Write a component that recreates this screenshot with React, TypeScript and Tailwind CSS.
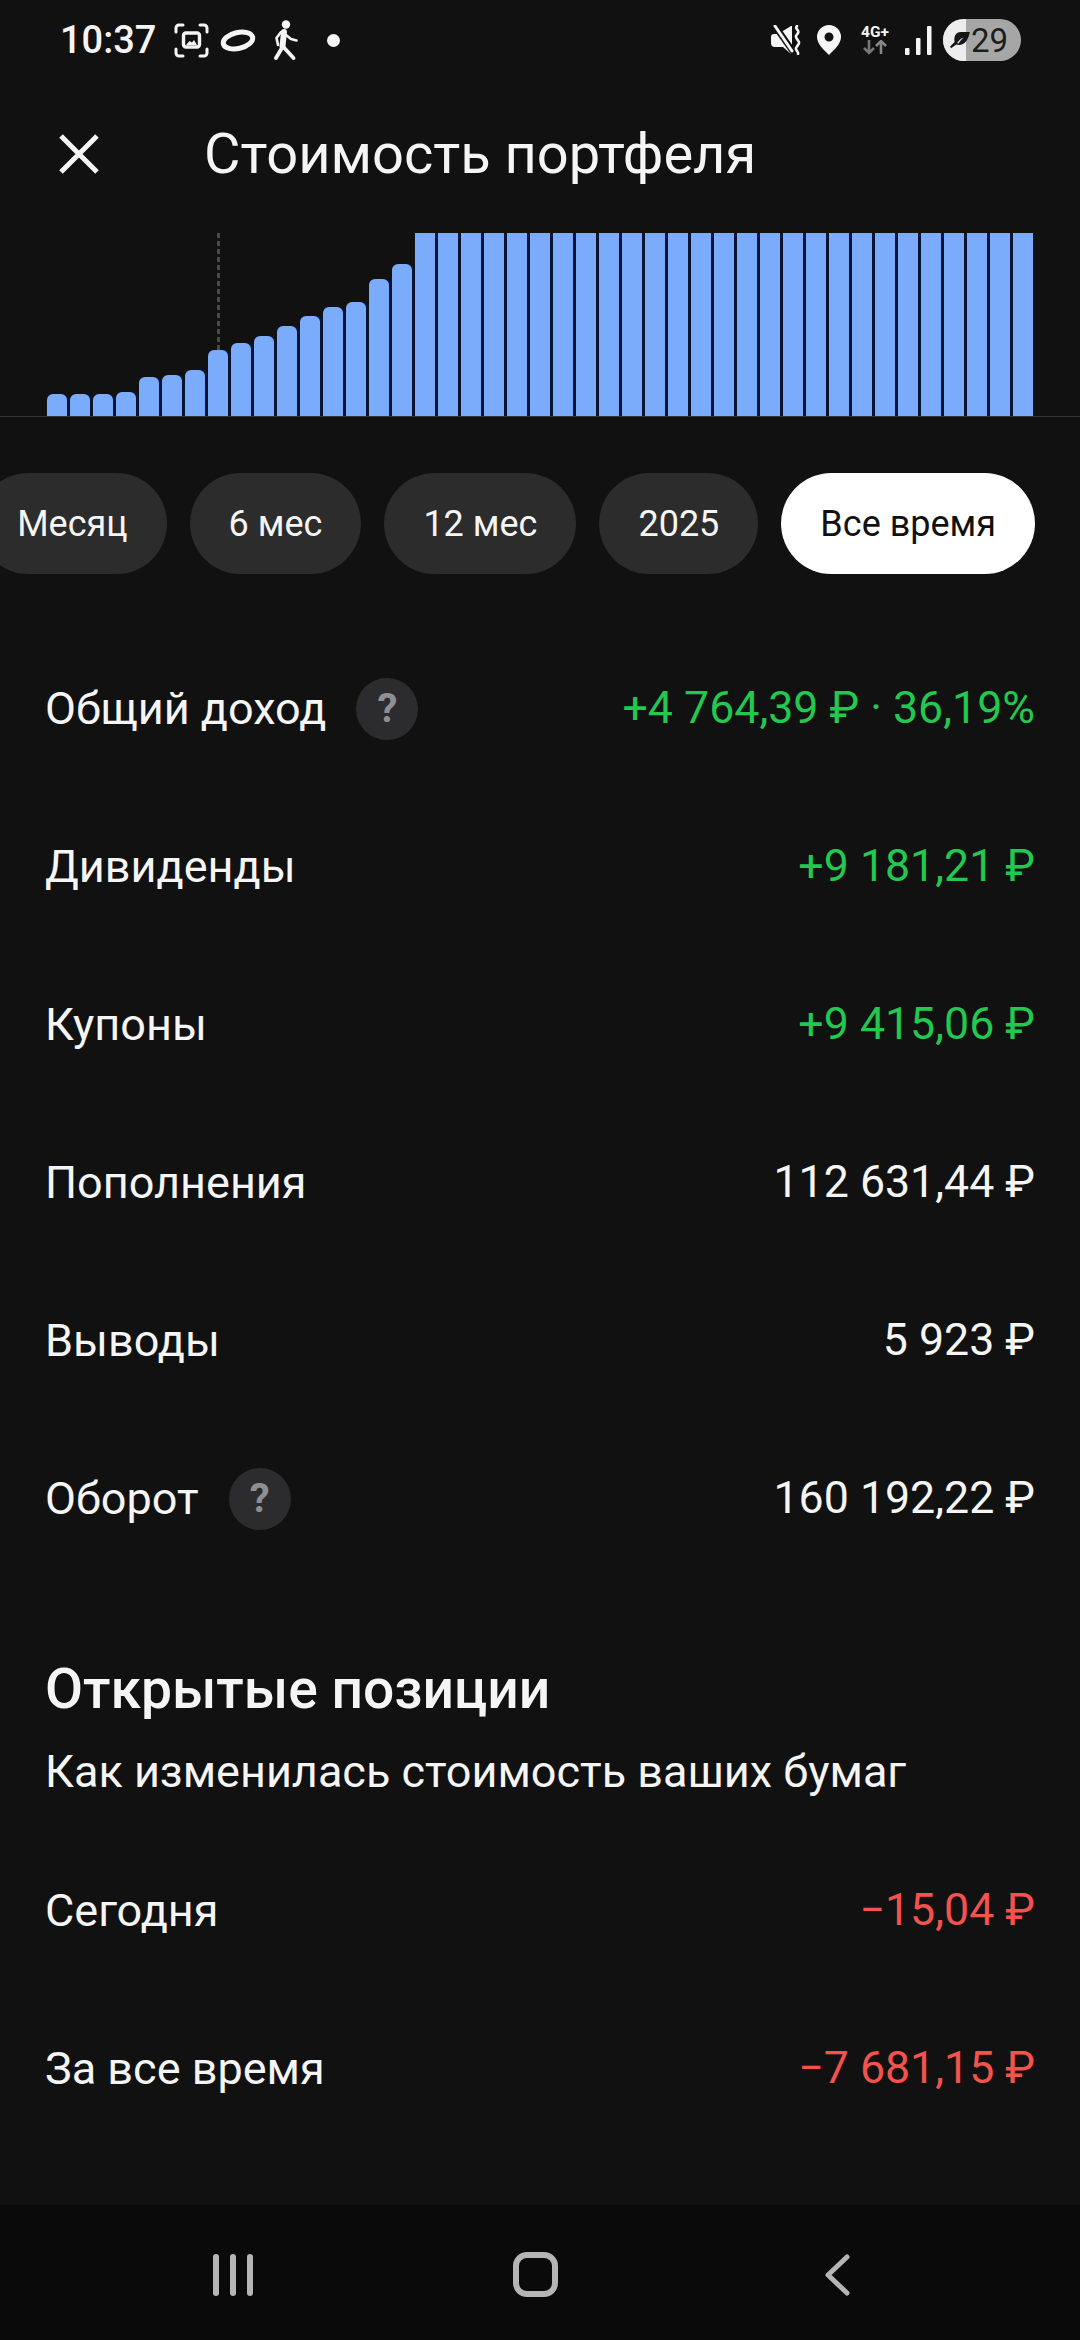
const heights = [22, 22, 22, 24, 39, 41, 46, 66, 73, 80, 90, 100, 109, 114, 137, 152];
const bars = Array.from({ length: 43 }, (_, i) => (i < heights.length ? heights[i] : 183));

const font = { fontFamily: "Roboto, sans-serif" };

function Help() {
  return (
    <span className="ml-[30px] flex h-[62px] w-[62px] items-center justify-center rounded-full bg-[#2c2c2e] text-[40px] font-bold leading-none text-[#8e8e93]">
      ?
    </span>
  );
}

function Row({ label, value, color, help }: { label: string; value: string; color?: string; help?: boolean }) {
  return (
    <div className="flex h-[158px] items-center justify-between pl-[45px] pr-[45px] text-[45px] text-[#f5f5f5]">
      <div className="flex items-center">
        <span>{label}</span>
        {help && <Help />}
      </div>
      <span className={"text-[44.7px] " + (color ?? "")}>{value}</span>
    </div>
  );
}

function StatusLeft() {
  return (
    <div className="flex items-center">
      <span className="w-[100px] text-[38px] font-medium leading-none text-[#f5f5f5]">10:37</span>
      <svg width="35" height="35" viewBox="0 0 35 35" className="ml-[14px]" fill="none" stroke="#f5f5f5" strokeWidth="3" strokeLinecap="round">
        <path d="M2 9V5a3 3 0 0 1 3-3h4M26 2h4a3 3 0 0 1 3 3v4M33 26v4a3 3 0 0 1-3 3h-4M9 33H5a3 3 0 0 1-3-3v-4" />
        <rect x="9.5" y="10" width="16" height="14" rx="2.5" strokeWidth="3.4" />
        <path d="M12 22l3.5-4 2.5 1.5 2-2.5 3 5z" fill="#f5f5f5" stroke="none" />
      </svg>
      <svg width="36" height="25" viewBox="0 0 36 25" className="ml-[11px]" fill="none">
        <ellipse cx="18" cy="12.5" rx="15" ry="8" transform="rotate(-13 18 12.5)" stroke="#f5f5f5" strokeWidth="5" />
      </svg>
      <svg width="25" height="40" viewBox="0 0 25 40" className="ml-[18px]" fill="none" stroke="#f5f5f5" strokeLinecap="round" strokeLinejoin="round">
        <circle cx="12" cy="4.5" r="4.2" fill="#f5f5f5" stroke="none" />
        <path d="M7 12L2.5 18l1.5 7M12 15l5 4 5.5 1.5" strokeWidth="2.6" />
        <path d="M10 12L8.5 26" strokeWidth="6" />
        <path d="M8.5 26l11 12M8.5 27L2 38" strokeWidth="3.8" />
      </svg>
      <span className="ml-[28px] h-[13px] w-[13px] rounded-full bg-[#f5f5f5]" />
    </div>
  );
}

function StatusRight() {
  return (
    <div className="flex items-center">
      <svg width="30" height="30" viewBox="0 0 30 30" fill="#f5f5f5">
        <path d="M0 12a3 3 0 0 1 3-3h4l13-8h1v28h-1l-8-7H4a4 4 0 0 1-4-4z" />
        <path d="M4 1l19 27" stroke="#111111" strokeWidth="6.5" />
        <path d="M4 1l17 25" stroke="#f5f5f5" strokeWidth="3" strokeLinecap="round" />
        <path d="M26 1c-3 3 3 4 1 7-2 3-3 3-1 6s3 3 1 6-3 3-1 6 1 2 1 3" fill="none" stroke="#f5f5f5" strokeWidth="2.6" strokeLinecap="round" />
      </svg>
      <svg width="24" height="30" viewBox="0 0 24 30" className="ml-[16px]">
        <path fillRule="evenodd" fill="#f5f5f5" d="M12 0a12 12 0 0 1 12 12c0 7-7 13-12 18C7 25 0 19 0 12A12 12 0 0 1 12 0zm0 7.5a4.5 4.5 0 1 0 0 9 4.5 4.5 0 0 0 0-9z" />
      </svg>
      <div className="ml-[17px] flex w-[34px] flex-col items-center">
        <span className="text-[15.5px] font-bold leading-[15px] text-[#f5f5f5]">4G+</span>
        <svg width="26" height="15" viewBox="0 0 26 15" fill="none" strokeWidth="2.6">
          <path d="M7 0v13M2 8l5 5 5-5" stroke="#777777" />
          <path d="M19 14V1M14 6l5-5 5 5" stroke="#888888" />
        </svg>
      </div>
      <svg width="27" height="29" viewBox="0 0 27 29" className="ml-[13px]" fill="#f5f5f5">
        <rect x="0" y="22" width="4.5" height="7" rx="1" />
        <rect x="11" y="12" width="4.5" height="17" rx="1" />
        <rect x="22" y="0" width="4.5" height="29" rx="1" />
      </svg>
      <div className="relative ml-[11px] flex h-[42px] w-[78px] items-center justify-end overflow-hidden rounded-full bg-[#a6a6a6] pr-[13px]">
        <div className="absolute inset-y-0 left-0 w-[23px] bg-[#ececec]" />
        <svg width="20" height="18" viewBox="0 0 22 20" className="absolute left-[7px] top-[13px]" fill="#161616">
          <path d="M22 0H12C6 0 4 5 5 11l-5 5 1 2 6-4c8 2 13-4 15-14zM8 12c2-3 4-5 7-6-2 2-4 4-6 7z" />
        </svg>
        <span className="relative text-[33px] leading-none text-[#1d1d1d]">29</span>
      </div>
    </div>
  );
}

export default function App() {
  return (
    <div className="flex h-[2340px] w-[1080px] flex-col overflow-hidden bg-[#111111]" style={font}>
      <div className="flex h-[78px] shrink-0 items-center justify-between pl-[60px] pr-[59px] pt-[2px]">
        <StatusLeft />
        <StatusRight />
      </div>

      <div className="flex h-[155px] shrink-0 items-center pb-[4px] pl-[59px]">
        <svg width="40" height="40" viewBox="0 0 40 40" fill="none" stroke="#f5f5f5" strokeWidth="5">
          <path d="M2 2l36 36M38 2L2 38" />
        </svg>
        <span className="ml-[105px] text-[56px] leading-none text-[#f5f5f5]">Стоимость портфеля</span>
      </div>

      <div className="flex h-[184px] shrink-0 items-end gap-[3px] border-b-[1px] border-[#333336] pl-[47px]">
        {bars.map((h, i) => (
          <div key={i} className="relative h-full w-[20px] shrink-0">
            {i === 7 && (
              <div className="absolute bottom-0 left-[9px] top-0 w-[3px] bg-[repeating-linear-gradient(to_bottom,#4a4a4a_0,#4a4a4a_5px,transparent_5px,transparent_8px)]" />
            )}
            <div
              className={
                "absolute bottom-0 left-0 w-[20px] bg-[#7aacfb] " +
                (i < 42 ? "shadow-[2.5px_0_0_#03163a] " : "") +
                (h === 183 ? "rounded-t-none" : "rounded-t-[6px]")
              }
              style={{ height: h }}
            />
          </div>
        ))}
      </div>

      <div className="mt-[56px] flex h-[101px] shrink-0 justify-end gap-[23px] overflow-hidden pr-[45px] text-[36px] leading-none">
        {["Месяц", "6 мес", "12 мес", "2025"].map((t) => (
          <div key={t} className="flex shrink-0 items-center rounded-full bg-[#2c2c2c] px-[39px] text-[#f5f5f5]">
            {t}
          </div>
        ))}
        <div className="flex shrink-0 items-center rounded-full bg-white px-[39px] text-[#111111]">Все время</div>
      </div>

      <div className="mt-[56px]">
        <Row label="Общий доход" value="+4 764,39 ₽ · 36,19%" color="text-[#22c84f]" help />
        <Row label="Дивиденды" value="+9 181,21 ₽" color="text-[#22c84f]" />
        <Row label="Купоны" value="+9 415,06 ₽" color="text-[#22c84f]" />
        <Row label="Пополнения" value="112 631,44 ₽" />
        <Row label="Выводы" value="5 923 ₽" />
        <Row label="Оборот" value="160 192,22 ₽" help />
      </div>

      <div className="mt-[81px] pl-[45px] text-[#f5f5f5]">
        <div className="text-[55.2px] font-medium leading-[60px]">Открытые позиции</div>
        <div className="mt-[23px] text-[45px] leading-[60px]">Как изменилась стоимость ваших бумаг</div>
      </div>

      <div className="mt-[30px]">
        <Row label="Сегодня" value="−15,04 ₽" color="text-[#f4524d]" />
        <Row label="За все время" value="−7 681,15 ₽" color="text-[#f4524d]" />
      </div>

      <div className="relative mt-auto h-[135px] w-full shrink-0 bg-[#0a0a0a]">
        <div className="absolute left-[213px] top-[49px] flex gap-[11px]">
          <span className="h-[42px] w-[6px] rounded-full bg-[#b5b5b5]" />
          <span className="h-[42px] w-[6px] rounded-full bg-[#b5b5b5]" />
          <span className="h-[42px] w-[6px] rounded-full bg-[#b5b5b5]" />
        </div>
        <span className="absolute left-[513px] top-[47px] h-[45px] w-[45px] rounded-[14px] border-[6px] border-[#b5b5b5]" />
        <svg width="25" height="42" viewBox="0 0 25 42" className="absolute left-[825px] top-[49px]" fill="none" stroke="#b5b5b5" strokeWidth="5" strokeLinecap="round" strokeLinejoin="round">
          <path d="M22 3L3 21l19 18" />
        </svg>
      </div>
    </div>
  );
}
